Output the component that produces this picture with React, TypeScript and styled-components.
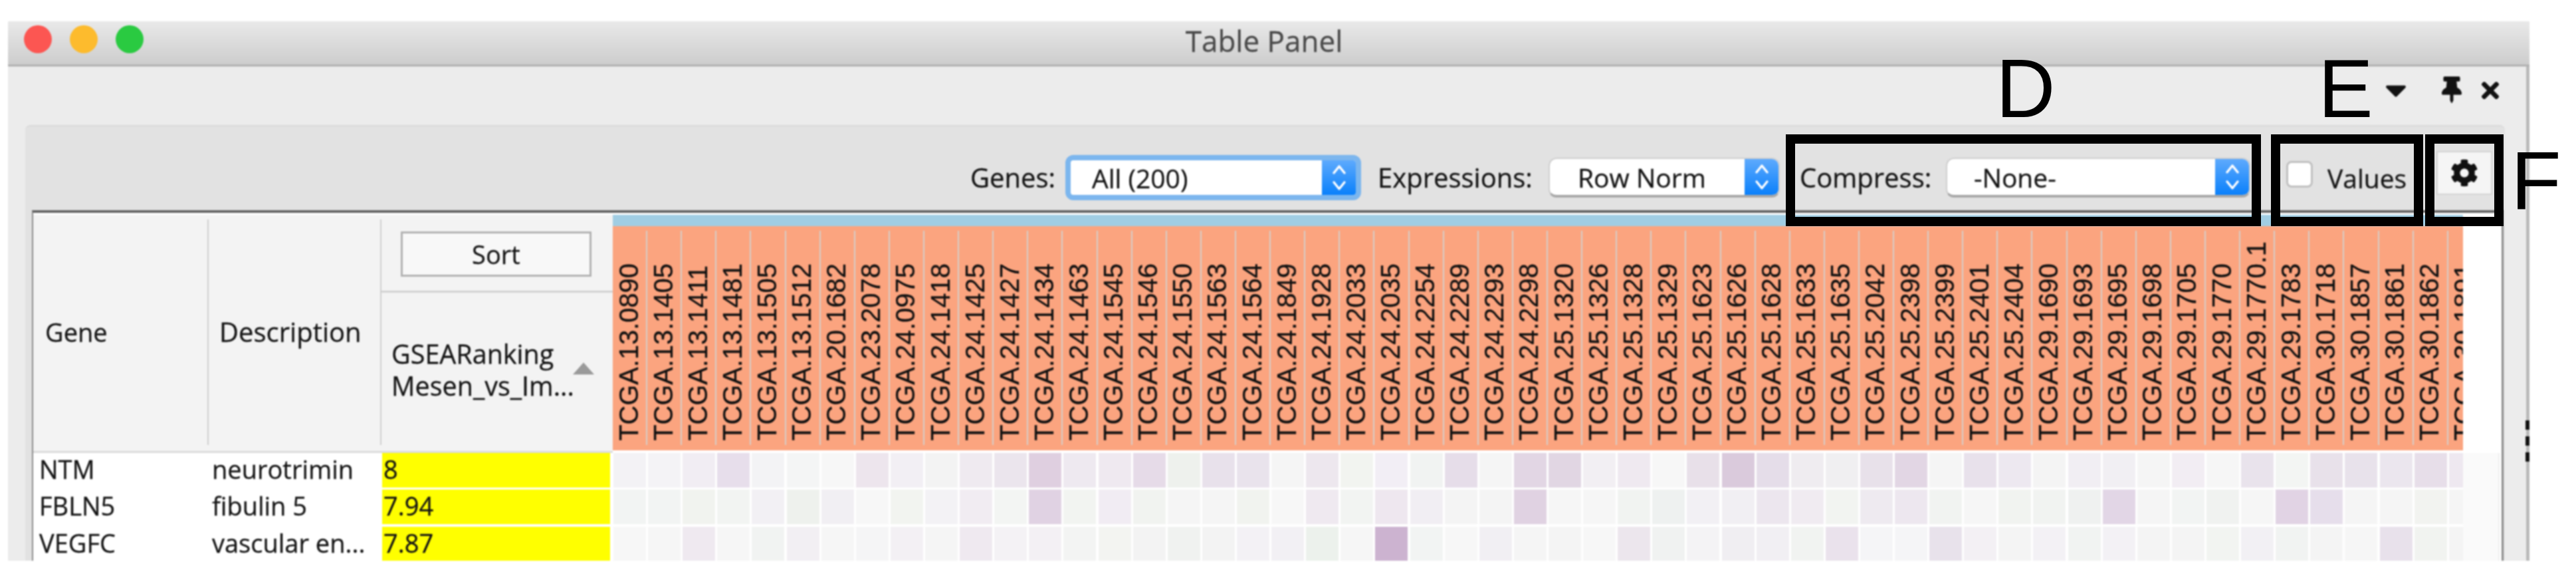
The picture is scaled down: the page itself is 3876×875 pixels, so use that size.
import React from "react";
import styled, { createGlobalStyle } from "styled-components";
import { FaCaretDown, FaCog, FaThumbtack, FaTimes } from "react-icons/fa";

const Global = createGlobalStyle`
  html, body { margin: 0; padding: 0; background: #fff; }
  * { box-sizing: border-box; }
`;

const Stage = styled.div`
  position: relative;
  width: 3876px;
  height: 875px;
  overflow: hidden;
  background: #fff;
  font-family: "Open Sans", "Liberation Sans", sans-serif;
  color: #141414;
`;
const Win = styled.div`
  margin: 32px 0 0 12px;
  width: 3794px;
  height: 811px;
  overflow: hidden;
  position: relative;
  filter: blur(0.8px);
  -webkit-text-stroke: 0.3px currentColor;
`;
const TitleBar = styled.div`
  height: 68px;
  display: grid;
  grid-template-columns: 1fr auto 1fr;
  align-items: center;
  padding-right: 14px;
  background: linear-gradient(#e9e9e9, #cdcdcd);
  border-bottom: 3px solid #b2b2b2;
`;
const Lights = styled.div`
  display: flex;
  gap: 27px;
  margin-left: 24px;
  margin-top: -12px;
`;
const Light = styled.span<{ $c: string }>`
  width: 42px;
  height: 42px;
  border-radius: 50%;
  background: ${(p) => p.$c};
`;
const Title = styled.div`
  font-size: 44px;
  color: #4a4a4a;
  margin-top: -7px;
  line-height: 1;
`;
const Body = styled.div`
  height: 743px;
  background: #ececec;
  border-right: 5px solid #b9b9b9;
  display: flex;
  flex-direction: column;
`;
const Dock = styled.div`
  height: 88px;
  flex: none;
  display: flex;
  justify-content: flex-end;
  padding-right: 39px;
  padding-top: 15px;
  align-items: flex-start;
  color: #111;
`;
const DockCaret = styled.span`
  display: flex;
  margin-right: 55px;
  height: 40px;
  align-items: center;
  width: 28px;
  justify-content: center;
  svg { width: 32px; height: 52px; flex: none; }
`;
const DockPin = styled.span`
  display: flex;
  margin-right: 28px;
  svg { width: 30px; height: 40px; }
`;
const DockClose = styled.span`
  display: flex;
  margin-top: 2px;
  svg { width: 30px; height: 38px; }
`;
const Panel = styled.div`
  flex: 1;
  min-height: 0;
  margin: 0 32px 0 26px;
  padding: 0 2px 0 10px;
  background: #e2e2e2;
  border-top: 2px solid #dadada;
  border-radius: 8px 8px 0 0;
  display: flex;
  flex-direction: column;
`;
const Toolbar = styled.div`
  height: 126px;
  flex: none;
  display: flex;
  align-items: center;
  justify-content: flex-end;
  padding-right: 17px;
  padding-top: 28px;
`;
const Label = styled.span<{ $w: number; $mr: number }>`
  width: ${(p) => p.$w}px;
  margin-right: ${(p) => p.$mr}px;
  font-size: 40px;
  line-height: 1;
  white-space: nowrap;
`;
const Select = styled.div<{ $w: number; $focus?: boolean; $mr: number }>`
  width: ${(p) => p.$w}px;
  height: ${(p) => (p.$focus ? 68 : 60)}px;
  margin-right: ${(p) => p.$mr}px;
  flex: none;
  display: flex;
  align-items: center;
  justify-content: space-between;
  background: #fff;
  border-radius: 12px;
  overflow: hidden;
  font-size: 39px;
  border: ${(p) => (p.$focus ? "8px solid #7cb6ee" : "2px solid #cfcfcf")};
  border-bottom: ${(p) => (p.$focus ? "8px solid #7cb6ee" : "4px solid #a8a8a8")};
`;
const SelectText = styled.span<{ $pad: number }>`
  padding-left: ${(p) => p.$pad}px;
  white-space: nowrap;
  line-height: 1;
`;
const Stepper = styled.span`
  flex: none;
  width: 51px;
  height: 100%;
  display: flex;
  align-items: center;
  justify-content: center;
  background: linear-gradient(#5eaafd, #0a80fb);
  svg { width: 26px; height: 44px; }
`;
const Check = styled.span`
  width: 40px;
  height: 40px;
  flex: none;
  background: #fff;
  border: 3px solid #c0c0c0;
  border-radius: 8px;
  margin-right: 22px;
  margin-top: -10px;
`;
const ValuesLabel = styled.span`
  font-size: 39px;
  line-height: 1;
  width: 119px;
  margin-right: 45px;
`;
const GearButton = styled.div`
  width: 84px;
  height: 66px;
  flex: none;
  display: flex;
  align-items: center;
  justify-content: center;
  background: #f5f5f5;
  border: 2px solid #d4d4d4;
  margin-top: -14px;
  color: #111;
  svg { width: 42px; height: 42px; }
`;
const Table = styled.div`
  flex: 1;
  min-height: 0;
  border-top: 4px solid #666;
  border-left: 2px solid #8c8c8c;
  border-right: 3px solid #8c8c8c;
  padding-top: 3px;
  background: #fff;
  overflow: hidden;
`;
const Header = styled.div`
  display: flex;
  height: 358px;
`;
const HeadCol = styled.div<{ $w: number }>`
  position: relative;
  width: ${(p) => p.$w}px;
  flex: none;
  background: #f3f3f3;
  border-bottom: 3px solid #dcdcdc;
  &::before {
    content: "";
    position: absolute;
    left: 0;
    top: 7px;
    bottom: 9px;
    width: 2px;
    background: #cfcfcf;
  }
`;
const HeadLabelCol = styled(HeadCol)<{ $fs: number }>`
  display: flex;
  align-items: center;
  padding-left: 18px;
  padding-bottom: 4px;
  font-size: ${(p) => p.$fs}px;
  &:first-child::before { display: none; }
`;
const SortWrap = styled.div`
  height: 117px;
  padding: 25px 0 0 31px;
  border-bottom: 3px solid #d2d2d2;
`;
const SortButton = styled.div`
  width: 287px;
  height: 68px;
  display: flex;
  align-items: center;
  justify-content: center;
  font-size: 38px;
  background: #f8f8f8;
  border: 3px solid #b2b2b2;
`;
const RankLabel = styled.div`
  position: relative;
  padding: 68px 0 0 17px;
  font-size: 39.5px;
  line-height: 48px;
  white-space: nowrap;
`;
const SortTri = styled.span`
  position: absolute;
  left: 290px;
  top: 105px;
  width: 0;
  height: 0;
  border-left: 16px solid transparent;
  border-right: 16px solid transparent;
  border-bottom: 18px solid #9a9a9a;
`;
const HeatHead = styled.div`
  flex: none;
  width: 2784px;
  height: 354px;
  display: flex;
  flex-direction: column;
  overflow: hidden;
`;
const BlueBar = styled.div`
  height: 17px;
  flex: none;
  background: #a0cde3;
`;
const HeadCells = styled.div`
  flex: 1;
  display: flex;
  background: #fba47f;
`;
const HeadCell = styled.div`
  position: relative;
  flex: 0 0 52.12px;
  display: flex;
  flex-direction: column;
  justify-content: flex-end;
  align-items: center;
  padding-bottom: 14px;
  padding-right: 5px;
  &::after {
    content: "";
    position: absolute;
    right: 0;
    top: 7px;
    bottom: 8px;
    width: 2px;
    background: #d5cfcb;
  }
`;
const HeadText = styled.span`
  writing-mode: vertical-rl;
  transform: rotate(180deg);
  font-family: "Liberation Sans", Arial, sans-serif;
  font-size: 40px;
  line-height: 40px;
  color: #111;
  white-space: nowrap;
`;
const Row = styled.div`
  display: flex;
  height: 55.33px;
`;
const TextCell = styled.div<{ $w: number; $pad: number }>`
  width: ${(p) => p.$w}px;
  padding-left: ${(p) => p.$pad}px;
  flex: none;
  height: 52px;
  font-size: 38px;
  line-height: 48px;
  white-space: nowrap;
`;
const Rank = styled.div`
  width: 343px;
  height: 52px;
  margin: 0 4px 0 3px;
  flex: none;
  padding-left: 2px;
  background: #ffff00;
  font-size: 38px;
  line-height: 48px;
`;
const Heat = styled.div`
  flex: none;
  width: 2784px;
  display: flex;
  overflow: hidden;
  padding-left: 1px;
`;
const HeatCell = styled.span<{ $c: string }>`
  flex: 0 0 49px;
  height: 52px;
  margin-right: 3.12px;
  background: ${(p) => p.$c};
`;
const Filler = styled.div`
  flex: 1;
  background: #fafafa;
  border-right: 2px solid #efefef;
  margin-right: 3px;
`;
const Grip = styled.div`
  position: absolute;
  right: 0;
  top: 600px;
  width: 6px;
  display: flex;
  flex-direction: column;
  gap: 10px;
`;
const GripDot = styled.span`
  height: 14px;
  background: #111;
`;
const Box = styled.div<{ $l: number; $w: number }>`
  position: absolute;
  left: ${(p) => p.$l}px;
  top: 202px;
  width: ${(p) => p.$w}px;
  height: 138px;
  border: 14px solid #000;
`;
const Letter = styled.div<{ $l: number; $t: number }>`
  position: absolute;
  left: ${(p) => p.$l}px;
  top: ${(p) => p.$t}px;
  font-family: "Liberation Sans", Arial, sans-serif;
  font-size: 124px;
  line-height: 124px;
  color: #000;
`;

const labels = "13.0890 13.1405 13.1411 13.1481 13.1505 13.1512 20.1682 23.2078 24.0975 24.1418 24.1425 24.1427 24.1434 24.1463 24.1545 24.1546 24.1550 24.1563 24.1564 24.1849 24.1928 24.2033 24.2035 24.2254 24.2289 24.2293 24.2298 25.1320 25.1326 25.1328 25.1329 25.1623 25.1626 25.1628 25.1633 25.1635 25.2042 25.2398 25.2399 25.2401 25.2404 29.1690 29.1693 29.1695 29.1698 29.1705 29.1770 29.1770.1 29.1783 30.1718 30.1857 30.1861 30.1862 30.1891".split(" ");

const rows: { gene: string; desc: string; rank: string; heat: string }[] = [
  {
    gene: "NTM",
    desc: "neurotrimin",
    rank: "8",
    heat: "f3f2f5 f4f3f6 f1edf3 e7deeb f3f3f5 f4f5f5 f7f7f7 ede5ed f2eff4 f3f3f3 efeaf0 ebe5ed dfcfe0 eee9f0 efe9f0 e6dbe8 eef1ed e8e1eb e9e3ec f5f5f5 ede7ee f2f4f0 f2eef5 f1f3f2 e6dde9 f5f5f5 e2d6e4 e1d6e3 f2eff3 efe9f0 f7f7f7 e8e0e9 dacadc e5dde9 efecf0 f0eff1 e8e1ea e2d6e4 f5f5f5 e8e1eb ede8f0 f4f4f4 f1eef3 f1eff3 f5f5f5 f2edf3 f6f6f6 e9e3ec f3f5f3 e8e1ea e8e2eb ebe6ee e7dee9 eee8f0",
  },
  {
    gene: "FBLN5",
    desc: "fibulin 5",
    rank: "7.94",
    heat: "f2f4f3 f2f4f3 f1f3ef f2f4f2 f2f0f4 eef1ed f1eff3 f7f7f7 f2f4f0 f3f2f5 f1ecf2 f3f5f3 e0d2e3 f2f4f1 f1ecf3 f1f3f0 f5f5f5 f5f5f5 f1f3ef f7f7f7 efe9f0 f2f4f2 eee7ef f1eef3 f4f4f4 f4f4f4 e0d2e2 f6f6f6 f6f6f6 f1f3f1 eef1f0 f2f0f4 f1eff3 ece6ee f0ebf1 f2f4f1 eeeaf0 ede7ef f1f3f1 f6f6f6 f1f3f0 f1f3f1 eff1f0 e2d6e6 f5f5f5 f2f4f3 f0f2f0 f6f6f6 e1d3e4 e6deeb f5f5f5 f5f5f5 f2f3f0 f5f5f5",
  },
  {
    gene: "VEGFC",
    desc: "vascular en...",
    rank: "7.87",
    heat: "f7f7f7 f6f6f6 efe9f0 f6f6f6 f1f3f2 f2eff3 f6f6f6 f5f5f6 f3f0f4 f5f5f5 efe9f0 f4f2f5 f3f0f4 f3f4f3 f3f4f1 f3f3f3 f0f2f0 f3f3f3 f3f1f5 f2f0f4 ecf1ec f6f6f6 ccb3d0 f2f4f3 f7f7f7 f1eff3 f5f5f5 f4f4f4 f7f7f7 ece6ed f0f2f1 f4f3f5 f0eef2 f1eff3 f1f3f1 eae2ec f5f5f7 f5f5f7 e8e2eb f3f0f4 f4f4f4 f3f1f5 f1f3f2 f3f1f5 f4f4f4 f4f4f4 f2f4f1 f2f0f4 f1f3f2 f4f4f4 f6f6f6 e8e1eb f1f3f0 f4f4f4",
  },
];

const Chevrons = () => (
  <svg viewBox="0 0 26 44" fill="none" stroke="#fff" strokeWidth="3.4" strokeLinecap="round" strokeLinejoin="round">
    <path d="M5 15 L13 5 L21 15" />
    <path d="M5 29 L13 39 L21 29" />
  </svg>
);

export default function App() {
  return (
    <Stage>
      <Global />
      <Win>
        <TitleBar>
          <Lights>
            <Light $c="#fc5652" />
            <Light $c="#fdbb2d" />
            <Light $c="#2aca41" />
          </Lights>
          <Title>Table Panel</Title>
          <span />
        </TitleBar>
        <Body>
          <Dock>
            <DockCaret>
              <FaCaretDown />
            </DockCaret>
            <DockPin>
              <FaThumbtack />
            </DockPin>
            <DockClose>
              <FaTimes />
            </DockClose>
          </Dock>
          <Panel>
            <Toolbar>
              <Label $w={125} $mr={18}>Genes:</Label>
              <Select $w={445} $focus $mr={25}>
                <SelectText $pad={32}>All (200)</SelectText>
                <Stepper><Chevrons /></Stepper>
              </Select>
              <Label $w={238} $mr={19}>Expressions:</Label>
              <Select $w={348} $mr={30}>
                <SelectText $pad={42}>Row Norm</SelectText>
                <Stepper><Chevrons /></Stepper>
              </Select>
              <Label $w={198} $mr={22}>Compress:</Label>
              <Select $w={458} $mr={54}>
                <SelectText $pad={40}>-None-</SelectText>
                <Stepper><Chevrons /></Stepper>
              </Select>
              <Check />
              <ValuesLabel>Values</ValuesLabel>
              <GearButton><FaCog /></GearButton>
            </Toolbar>
            <Table>
              <Header>
                <HeadLabelCol $w={262} $fs={38}>Gene</HeadLabelCol>
                <HeadLabelCol $w={260} $fs={40}>Description</HeadLabelCol>
                <HeadCol $w={350}>
                  <SortWrap><SortButton>Sort</SortButton></SortWrap>
                  <RankLabel>
                    GSEARanking<br />Mesen_vs_Im...
                    <SortTri />
                  </RankLabel>
                </HeadCol>
                <HeatHead>
                  <BlueBar />
                  <HeadCells>
                    {labels.map((l) => (
                      <HeadCell key={l}><HeadText>{"TCGA." + l}</HeadText></HeadCell>
                    ))}
                  </HeadCells>
                </HeatHead>
              </Header>
              {rows.map((r) => (
                <Row key={r.gene}>
                  <TextCell $w={262} $pad={9}>{r.gene}</TextCell>
                  <TextCell $w={260} $pad={7}>{r.desc}</TextCell>
                  <Rank>{r.rank}</Rank>
                  <Heat>
                    {r.heat.split(" ").map((c, i) => (
                      <HeatCell key={i} $c={"#" + c} />
                    ))}
                  </Heat>
                  <Filler />
                </Row>
              ))}
            </Table>
          </Panel>
        </Body>
        <Grip>
          <GripDot />
          <GripDot />
          <GripDot />
        </Grip>
      </Win>
      <Box $l={2687} $w={715} />
      <Box $l={3417} $w={229} />
      <Box $l={3649} $w={118} />
      <Letter $l={3003} $t={71}>D</Letter>
      <Letter $l={3488} $t={71}>E</Letter>
      <Letter $l={3778} $t={210}>F</Letter>
    </Stage>
  );
}
